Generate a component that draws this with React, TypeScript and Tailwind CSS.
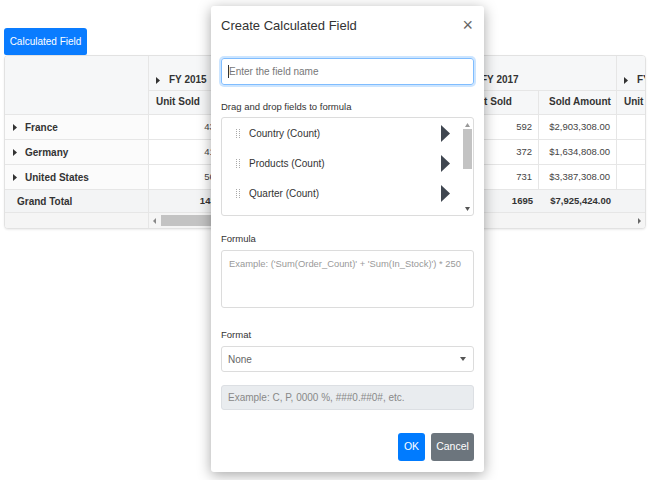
import React from 'react';

const font = { fontFamily: '"Liberation Sans", Arial, sans-serif' };

const years = [
  { label: 'FY 2015', vals: [['434', '$2,100,200.00'], ['412', '$1,980,400.00'], ['567', '$2,605,300.00'], ['1413', '$6,685,900.00']] },
  { label: 'FY 2016', vals: [['512', '$2,410,608.00'], ['398', '$1,702,300.00'], ['654', '$3,011,900.00'], ['1564', '$7,124,808.00']] },
  { label: 'FY 2017', vals: [['592', '$2,903,308.00'], ['372', '$1,634,808.00'], ['731', '$3,387,308.00'], ['1695', '$7,925,424.00']] },
  { label: 'FY 2018', vals: [['', ''], ['', ''], ['', ''], ['', '']] },
];

const rowNames = ['France', 'Germany', 'United States'];

const SmallTri = () => (
  <svg width="4" height="7" viewBox="0 0 4 7" className="shrink-0">
    <path d="M0 0 L4 3.5 L0 7 Z" fill="#333" />
  </svg>
);

const BigTri = () => (
  <svg width="9" height="17" viewBox="0 0 9 17" className="shrink-0">
    <path d="M0 0 L9 8.5 L0 17 Z" fill="#3f4650" />
  </svg>
);

const Grip = () => (
  <div className="grid grid-cols-2 gap-x-[2px] gap-y-[1px] w-[4px] shrink-0">
    {Array.from({ length: 10 }).map((_, i) => (
      <span key={i} className="w-[1px] h-[1px] bg-[#aaa]" />
    ))}
  </div>
);

function PivotTable() {
  return (
    <div className="ml-1 w-[642px] overflow-hidden rounded-sm border border-[#e2e2e2] bg-white shadow-[0_1px_2px_rgba(0,0,0,0.08)] text-[9.5px] text-[#333] whitespace-nowrap">
      <div className="flex">
        <div className="w-[144px] h-[59px] shrink-0 bg-[#f6f7f8] border-r border-b border-[#e6e6e6]" />
        {years.map((y) => (
          <div key={y.label} className="w-[156px] shrink-0 flex flex-col">
            <div className="h-[35px] flex items-end gap-[9px] pl-[7px] pb-[3px] bg-[#f6f7f8] border-r border-b border-[#e6e6e6] font-bold text-[10px]">
              <div className="h-[14px] flex items-center"><SmallTri /></div>
              <span className="leading-[14px]">{y.label}</span>
            </div>
            <div className="flex h-[24px] bg-[#f6f7f8] border-b border-[#e6e6e6] font-bold text-[10px]">
              <div className="w-[78px] border-r border-[#e6e6e6] pl-[7px] pb-[2px] flex items-center">Unit Sold</div>
              <div className="w-[78px] border-r border-[#e6e6e6] pl-[10px] pb-[2px] flex items-center">Sold Amount</div>
            </div>
          </div>
        ))}
      </div>
      {rowNames.map((name, ri) => (
        <div key={name} className="flex h-[25px]">
          <div className="w-[144px] shrink-0 flex items-center gap-[8px] pl-[8px] bg-[#fbfbfb] border-r border-b border-[#e6e6e6] font-bold text-[10px]">
            <SmallTri />
            <span>{name}</span>
          </div>
          {years.map((y) => (
            <div key={y.label} className="flex shrink-0">
              <div className="w-[78px] flex items-center justify-end pr-[6px] border-r border-b border-[#e6e6e6] text-[#444]">{y.vals[ri][0]}</div>
              <div className="w-[78px] flex items-center justify-end pr-[6px] border-r border-b border-[#e6e6e6] text-[#444]">{y.vals[ri][1]}</div>
            </div>
          ))}
        </div>
      ))}
      <div className="flex h-[23px] bg-[#f3f4f5] font-bold">
        <div className="w-[144px] shrink-0 flex items-center pl-[12px] border-r border-b border-[#e6e6e6] text-[10px]">Grand Total</div>
        {years.map((y) => (
          <div key={y.label} className="flex shrink-0">
            <div className="w-[78px] flex items-center justify-end pr-[6px] border-b border-[#e6e6e6]">{y.vals[3][0]}</div>
            <div className="w-[78px] flex items-center justify-end pr-[6px] border-b border-[#e6e6e6]">{y.vals[3][1]}</div>
          </div>
        ))}
      </div>
      <div className="flex h-[15px] bg-[#f5f5f5]">
        <div className="w-[144px] shrink-0 border-r border-[#e6e6e6]" />
        <div className="flex-1 flex items-center pl-[4px] pr-[4px]">
          <svg width="3" height="6" viewBox="0 0 3 6"><path d="M3 0 L0 3 L3 6 Z" fill="#888" /></svg>
          <div className="ml-[5px] w-[260px] h-[11px] bg-[#c3c3c3]" />
          <div className="flex-1" />
          <svg width="3" height="6" viewBox="0 0 3 6"><path d="M0 0 L3 3 L0 6 Z" fill="#666" /></svg>
        </div>
      </div>
    </div>
  );
}

function Dialog() {
  const fields = ['Country (Count)', 'Products (Count)', 'Quarter (Count)'];
  return (
    <div className="absolute left-[211px] top-[6px] w-[273px] h-[466px] bg-white rounded-[3px] shadow-[0_3px_14px_rgba(0,0,0,0.35)] px-[10px] text-[#333] whitespace-nowrap">
      <div className="pt-[9px] h-[29px] flex items-start justify-between">
        <span className="text-[13px] leading-[21px] text-[#333]">Create Calculated Field</span>
        <span className="text-[18px] leading-[21px] text-[#666] mr-[1px]">×</span>
      </div>
      <div className="mt-[23px] h-[27px] rounded-[3px] border border-[#80bdff] shadow-[0_0_0_2px_rgba(0,123,255,0.2)] flex items-center pl-[6px] text-[10px] text-[#777]">
        <span className="w-[1px] h-[13px] bg-[#333]" />
        <span>Enter the field name</span>
      </div>
      <div className="mt-[14px] text-[9.5px] leading-[15px]">Drag and drop fields to formula</div>
      <div className="mt-[3px] h-[99px] rounded-[3px] border border-[#dcdcdc] flex overflow-hidden">
        <div className="flex-1 flex flex-col">
          {fields.map((f) => (
            <div key={f} className="h-[30px] flex items-center pl-[14px] pr-[12px] text-[10px]">
              <Grip />
              <span className="ml-[9px] flex-1 text-[#333]">{f}</span>
              <BigTri />
            </div>
          ))}
        </div>
        <div className="w-[11px] flex flex-col items-center pt-[5px] pb-[4px]">
          <svg width="5" height="4" viewBox="0 0 5 4"><path d="M0 4 L2.5 0 L5 4 Z" fill="#999" /></svg>
          <div className="mt-[2px] w-[9px] h-[40px] bg-[#c3c3c3]" />
          <div className="flex-1" />
          <svg width="5" height="4" viewBox="0 0 5 4"><path d="M0 0 L2.5 4 L5 0 Z" fill="#555" /></svg>
        </div>
      </div>
      <div className="mt-[16px] text-[9.5px] leading-[14px]">Formula</div>
      <div className="mt-[4px] h-[58px] rounded-[3px] border border-[#dcdcdc] px-[7px] pt-[6px] text-[9.4px] text-[#999]">
        Example: ('Sum(Order_Count)' + 'Sum(In_Stock)') * 250
      </div>
      <div className="mt-[20px] text-[9.5px] leading-[14px]">Format</div>
      <div className="mt-[4px] h-[26px] rounded-[3px] border border-[#dcdcdc] flex items-center justify-between pl-[6px] pr-[7px] text-[10px] text-[#666]">
        <span>None</span>
        <svg width="6" height="4" viewBox="0 0 6 4"><path d="M0 0 L3 4 L6 0 Z" fill="#555" /></svg>
      </div>
      <div className="mt-[13px] h-[25px] rounded-[3px] border border-[#dcdfe3] bg-[#e9ecef] flex items-center pl-[6px] text-[10px] text-[#888]">
        Example: C, P, 0000 %, ###0.##0#, etc.
      </div>
      <div className="mt-[23px] flex justify-end gap-[6px]">
        <button className="h-[28px] w-[27px] rounded-[3px] bg-[#007bff] text-white text-[10.5px]">OK</button>
        <button className="h-[28px] w-[43px] rounded-[3px] bg-[#6c757d] text-white text-[10.5px]">Cancel</button>
      </div>
    </div>
  );
}

export default function App() {
  return (
    <div className="relative w-[650px] h-[480px] bg-white overflow-hidden" style={font}>
      <div className="pt-[28px] flex flex-col items-start">
        <button className="ml-1 h-[27px] w-[83px] rounded-t-[3px] rounded-b-[2px] bg-[#0a7cff] text-white text-[10px] whitespace-nowrap">Calculated Field</button>
        <PivotTable />
      </div>
      <Dialog />
    </div>
  );
}
